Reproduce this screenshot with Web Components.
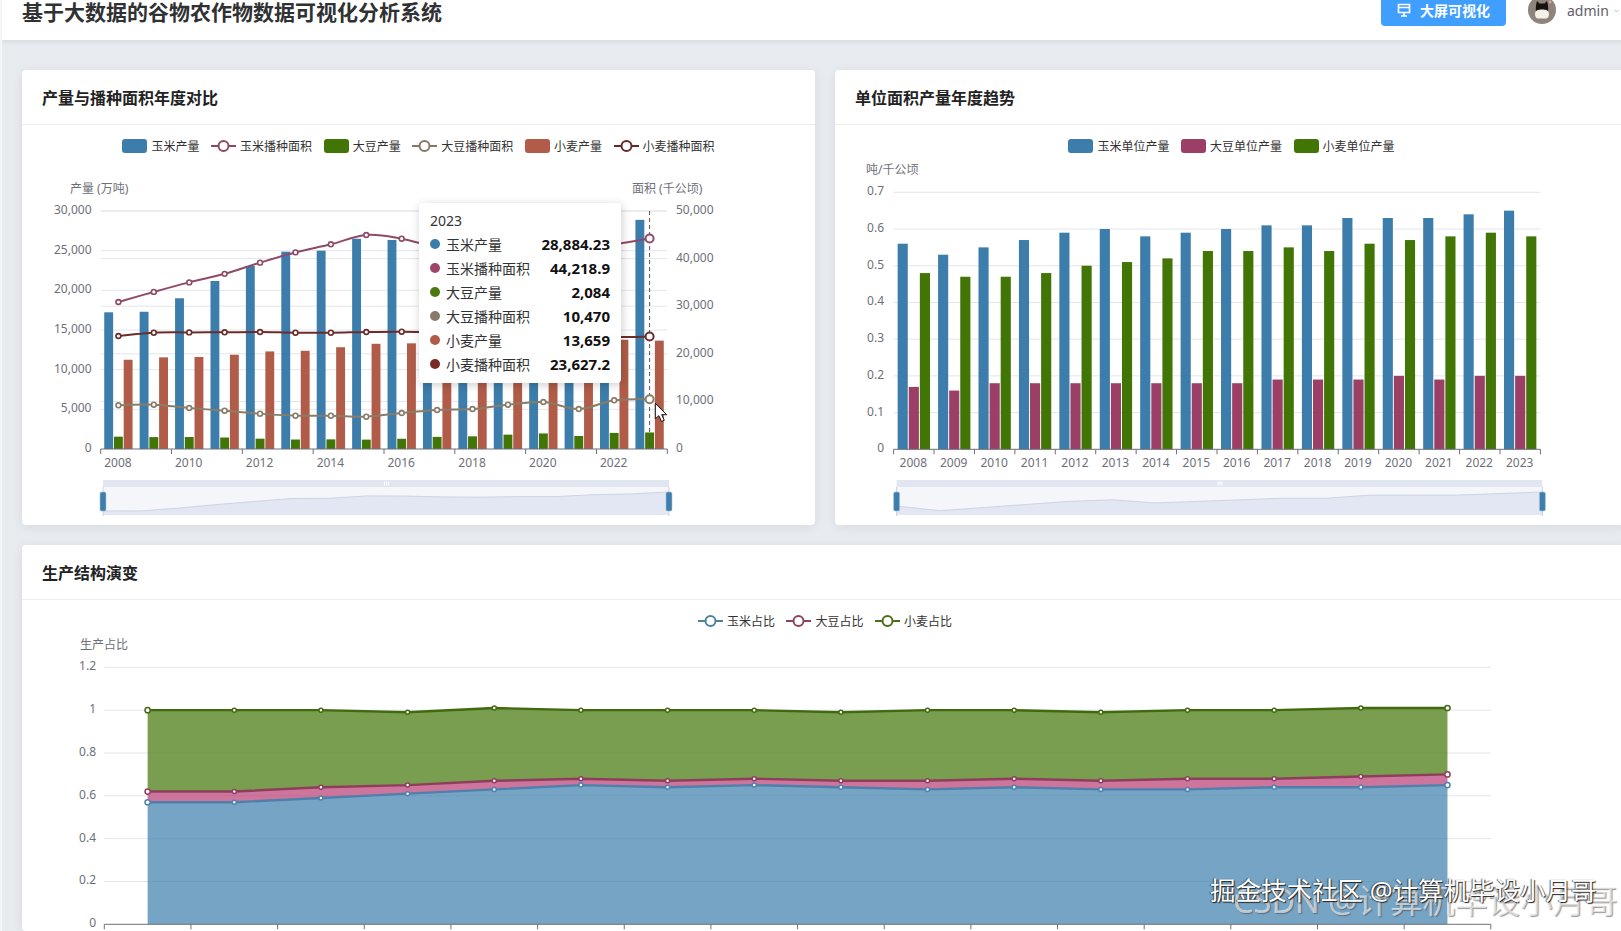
<!DOCTYPE html>
<html lang="zh">
<head>
<meta charset="utf-8">
<title>谷物农作物数据可视化分析系统</title>
<style>
  html, body { margin: 0; height: 931px; overflow: hidden; background: #f3f5f7; }
  body { font-family: "Noto Sans", "Noto Sans CJK SC", sans-serif; }
</style>
</head>
<body>
<dash-page>
  <top-bar slot="top" heading="基于大数据的谷物农作物数据可视化分析系统"></top-bar>
  <chart-card heading="产量与播种面积年度对比">
    <chart-legend>
      <legend-item kind="bar" color="#3c7dab">玉米产量</legend-item>
      <legend-item kind="line" color="#8c4a62">玉米播种面积</legend-item>
      <legend-item kind="bar" color="#417505">大豆产量</legend-item>
      <legend-item kind="line" color="#857868">大豆播种面积</legend-item>
      <legend-item kind="bar" color="#b05c48">小麦产量</legend-item>
      <legend-item kind="line" color="#642a28">小麦播种面积</legend-item>
    </chart-legend>
    <combo-chart></combo-chart>
    <chart-tooltip title="2023">
      <tip-row color="#3c7dab" value="28,884.23">玉米产量</tip-row>
      <tip-row color="#a0436a" value="44,218.9">玉米播种面积</tip-row>
      <tip-row color="#4c7a12" value="2,084">大豆产量</tip-row>
      <tip-row color="#887a6a" value="10,470">大豆播种面积</tip-row>
      <tip-row color="#b05c48" value="13,659">小麦产量</tip-row>
      <tip-row color="#7a2a26" value="23,627.2">小麦播种面积</tip-row>
    </chart-tooltip>
  </chart-card>
  <chart-card heading="单位面积产量年度趋势">
    <chart-legend>
      <legend-item kind="bar" color="#3c7dab">玉米单位产量</legend-item>
      <legend-item kind="bar" color="#9c3f66">大豆单位产量</legend-item>
      <legend-item kind="bar" color="#417505">小麦单位产量</legend-item>
    </chart-legend>
    <yield-chart></yield-chart>
  </chart-card>
  <chart-card heading="生产结构演变" wide>
    <chart-legend>
      <legend-item kind="line" color="#4f8199">玉米占比</legend-item>
      <legend-item kind="line" color="#8a4459">大豆占比</legend-item>
      <legend-item kind="line" color="#4a6e1a">小麦占比</legend-item>
    </chart-legend>
    <stack-chart></stack-chart>
  </chart-card>
  <video-marks slot="marks"></video-marks>
</dash-page>

<script>
const YEARS = Array.from({ length: 16 }, (_, i) => 2008 + i);
const AXIS_TEXT = '#6e7079';
const GRID = '#e4e6ec';
const AXIS = '#6e7079';

// px helpers, charts are drawn in page coordinates through the svg viewBox
function smoothPath(pts) {
  let d = `M${pts[0][0]} ${pts[0][1]}`;
  for (let i = 0; i < pts.length - 1; i++) {
    const p0 = pts[i - 1] || pts[i];
    const p1 = pts[i];
    const p2 = pts[i + 1];
    const p3 = pts[i + 2] || p2;
    const k = 0.18;
    d += `C${p1[0] + (p2[0] - p0[0]) * k} ${p1[1] + (p2[1] - p0[1]) * k} ${p2[0] - (p3[0] - p1[0]) * k} ${p2[1] - (p3[1] - p1[1]) * k} ${p2[0]} ${p2[1]}`;
  }
  return d;
}

function hGrid(x0, x1, ys) {
  return ys.map(y => `<line x1="${x0}" x2="${x1}" y1="${y}" y2="${y}" stroke="${GRID}"/>`).join('');
}

function yLabels(x, items, anchor = 'end') {
  return items.map(([y, t]) => `<text x="${x}" y="${y - 1.5}" text-anchor="${anchor}" dominant-baseline="central">${t}</text>`).join('');
}

function xAxis(x0, x1, y, bands, every) {
  const band = (x1 - x0) / bands;
  let s = `<line x1="${x0}" x2="${x1}" y1="${y}" y2="${y}" stroke="${AXIS}"/>`;
  for (let i = 0; i <= bands; i += every) {
    const x = x0 + i * band;
    s += `<line x1="${x}" x2="${x}" y1="${y}" y2="${y + 5}" stroke="${AXIS}"/>`;
  }
  return s;
}

function barGroup(x0, band, base, groups) {
  const avail = band * 0.8;
  const gap = avail * 0.03;
  const bw = (avail - gap * (groups.length - 1)) / groups.length;
  let s = '';
  groups.forEach((g, gi) => {
    g.heights.forEach((h, i) => {
      const x = x0 + i * band + band * 0.1 + gi * (bw + gap);
      s += `<rect x="${x.toFixed(2)}" y="${(base - h).toFixed(2)}" width="${bw.toFixed(2)}" height="${h.toFixed(2)}" fill="${g.color}"/>`;
    });
  });
  return s;
}

function sliderBox(x0, x1, tops) {
  const n = tops.length;
  const pts = tops.map((y, i) => `${(x0 + (x1 - x0) * i / (n - 1)).toFixed(1)},${y.toFixed(1)}`);
  const mid = (x0 + x1) / 2;
  return `
    <rect x="${x0}" y="480" width="${x1 - x0}" height="7" fill="#e2e6f0"/>
    <rect x="${x0}" y="487" width="${x1 - x0}" height="28" fill="#f5f6f9"/>
    <polygon points="${x0},515 ${pts.join(' ')} ${x1},515" fill="#e3e7f3"/>
    <polyline points="${pts.join(' ')}" fill="none" stroke="#cdd4e4"/>
    <line x1="${x0}" x2="${x0}" y1="487" y2="516" stroke="#c9d2e2"/>
    <line x1="${x1}" x2="${x1}" y1="487" y2="516" stroke="#c9d2e2"/>
    <rect x="${mid - 2}" y="481.5" width="1" height="4" fill="#fff"/><rect x="${mid}" y="481.5" width="1" height="4" fill="#fff"/><rect x="${mid + 2}" y="481.5" width="1" height="4" fill="#fff"/>
    <rect x="${x0 - 3}" y="492" width="6" height="19" rx="1.5" fill="#3d7eab" stroke="#a9c4d8" stroke-width=".6"/>
    <rect x="${x1 - 3}" y="492" width="6" height="19" rx="1.5" fill="#3d7eab" stroke="#a9c4d8" stroke-width=".6"/>`;
}

class SvgChart extends HTMLElement {
  constructor() {
    super();
    this.attachShadow({ mode: 'open' });
  }

  connectedCallback() {
    const [x, y, w, h] = this.box();
    this.shadowRoot.innerHTML = `
      <style>
        :host { display: block; height: ${h}px; }
        svg { display: block; width: ${w}px; height: ${h}px; overflow: hidden; }
        text { font: 12px "Noto Sans", "Noto Sans CJK SC", sans-serif; fill: ${AXIS_TEXT}; }
      </style>
      <svg viewBox="${x} ${y} ${w} ${h}">${this.draw()}</svg>`;
  }
}

class ComboChart extends SvgChart {
  box() { return [22, 153, 793, 372]; }

  draw() {
    const x0 = 100.7, x1 = 667.3, top = 211, base = 449;
    const band = (x1 - x0) / 16;
    const corn = [17230, 17300, 19000, 21176, 23067, 24870, 25000, 26500, 26350, 25900, 25700, 26080, 26070, 27250, 27720, 28884];
    const soy = [1554, 1500, 1510, 1450, 1300, 1195, 1215, 1180, 1290, 1528, 1597, 1810, 1960, 1640, 2028, 2084];
    const wheat = [11250, 11550, 11600, 11880, 12300, 12380, 12830, 13260, 13320, 13330, 13140, 13360, 13420, 13690, 13770, 13659];
    const cornArea = [30880, 33000, 35000, 36800, 39150, 41300, 43000, 44960, 44180, 42400, 42100, 41300, 41260, 43300, 43070, 44219];
    const soyArea = [9180, 9306, 8613, 8046, 7416, 6996, 6996, 6786, 7563, 8193, 8403, 9306, 9874, 8403, 10231, 10470];
    const wheatArea = [23740, 24430, 24500, 24520, 24580, 24430, 24430, 24580, 24640, 24500, 24400, 24300, 24200, 24000, 23530, 23627];
    const left = v => v / 30000 * (base - top);
    const right = v => v / 50000 * (base - top);

    const leftYs = [0, 1, 2, 3, 4, 5, 6].map(i => base - i * (base - top) / 6);
    const rightYs = [0, 1, 2, 3, 4, 5].map(i => base - i * (base - top) / 5);

    let s = hGrid(x0, x1, leftYs.slice(1)) + hGrid(x0, x1, rightYs.slice(1));
    s += `<text x="70" y="188" dominant-baseline="central">产量 (万吨)</text>`;
    s += `<text x="632" y="188" dominant-baseline="central">面积 (千公顷)</text>`;
    s += yLabels(91.5, leftYs.map((y, i) => [y, (i * 5000).toLocaleString('en-US')]));
    s += yLabels(676, rightYs.map((y, i) => [y, (i * 10000).toLocaleString('en-US')]), 'start');
    s += barGroup(x0, band, base, [
      { color: '#3c7dab', heights: corn.map(left) },
      { color: '#417505', heights: soy.map(left) },
      { color: '#b05c48', heights: wheat.map(left) },
    ]);
    s += xAxis(x0, x1, base, 16, 2);
    YEARS.forEach((yr, i) => {
      if (i % 2 === 0) s += `<text x="${x0 + band * (i + .5) - .5}" y="462" text-anchor="middle" dominant-baseline="central">${yr}</text>`;
    });

    const lastX = x0 + band * 15.5;
    s += `<line x1="${lastX}" x2="${lastX}" y1="${top}" y2="${base}" stroke="#555" stroke-dasharray="4 3"/>`;
    [[cornArea, '#8e4a66'], [soyArea, '#8a7d68'], [wheatArea, '#6b2c2a']].forEach(([vals, color]) => {
      const pts = vals.map((v, i) => [x0 + band * (i + .5), base - right(v)]);
      s += `<path d="${smoothPath(pts)}" fill="none" stroke="${color}" stroke-width="2"/>`;
      pts.forEach((p, i) => {
        const r = i === 15 ? 4 : 2.4;
        s += `<circle cx="${p[0]}" cy="${p[1]}" r="${r}" fill="#fff" stroke="${color}" stroke-width="${i === 15 ? 2 : 1.6}"/>`;
      });
    });
    s += sliderBox(103, 669, corn.map(v => 511 - (v - 17230) / (28884 - 17230) * 19));
    s += `<path transform="translate(655.3 403.3)" d="M0 0V15.5L3.6 12.4 6.2 18.2 9 17 6.4 11.4H11.4Z" fill="#fff" stroke="#111" stroke-width="1"/>`;
    return s;
  }
}

class YieldChart extends SvgChart {
  box() { return [835, 153, 793, 372]; }

  draw() {
    const x0 = 893.6, x1 = 1540.4, top = 192.3, base = 449.3;
    const band = (x1 - x0) / 16;
    const step = (base - top) / 7;
    const px = v => v / 0.1 * step;
    const corn = [.56, .53, .55, .57, .59, .60, .58, .59, .60, .61, .61, .63, .63, .63, .64, .65];
    const soy = [.17, .16, .18, .18, .18, .18, .18, .18, .18, .19, .19, .19, .20, .19, .20, .20];
    const wheat = [.48, .47, .47, .48, .50, .51, .52, .54, .54, .55, .54, .56, .57, .58, .59, .58];
    const ys = [0, 1, 2, 3, 4, 5, 6, 7].map(i => base - i * step);

    let s = hGrid(x0, x1, ys.slice(1));
    s += `<text x="866" y="169.7" dominant-baseline="central">吨/千公顷</text>`;
    s += yLabels(884, ys.map((y, i) => [y, i === 0 ? '0' : (i / 10).toFixed(1)]));
    s += barGroup(x0, band, base, [
      { color: '#3c7dab', heights: corn.map(px) },
      { color: '#9c3f66', heights: soy.map(px) },
      { color: '#417505', heights: wheat.map(px) },
    ]);
    s += xAxis(x0, x1, base, 16, 1);
    YEARS.forEach((yr, i) => {
      s += `<text x="${x0 + band * (i + .5) - .5}" y="462" text-anchor="middle" dominant-baseline="central">${yr}</text>`;
    });
    s += sliderBox(896.6, 1542.4, corn.map(v => 510.7 - (v - .53) / .12 * 18.7));
    return s;
  }
}

class StackChart extends SvgChart {
  box() { return [22, 628, 1606, 303]; }

  draw() {
    const x0 = 104.3, x1 = 1490.8, base = 924.3;
    const band = (x1 - x0) / 16;
    const step = 42.83;
    const corn = [.57, .57, .59, .61, .63, .65, .64, .65, .64, .63, .64, .63, .63, .64, .64, .65];
    const soy = [.62, .62, .64, .65, .67, .68, .67, .68, .67, .67, .68, .67, .68, .68, .69, .70];
    const wheat = [1, 1, 1, .99, 1.01, 1, 1, 1, .99, 1, 1, .99, 1, 1, 1.01, 1.01];
    const toPts = vals => vals.map((v, i) => [x0 + band * (i + .5), base - v / .2 * step]);
    const ys = [0, 1, 2, 3, 4, 5, 6].map(i => base - i * step);
    const labels = ['0', '0.2', '0.4', '0.6', '0.8', '1', '1.2'];

    const flat = pts => pts.map(p => p.join(',')).join(' ');
    const bands = (lower, upper, color) => `<polygon points="${flat(upper)} ${flat([...lower].reverse())}" fill="${color}" fill-opacity=".7"/>`;
    const pCorn = toPts(corn), pSoy = toPts(soy), pWheat = toPts(wheat);
    const floor = pCorn.map(p => [p[0], base]);

    let s = hGrid(x0, x1, ys.slice(1));
    s += `<text x="80" y="644" dominant-baseline="central">生产占比</text>`;
    s += yLabels(96, ys.map((y, i) => [y, labels[i]]));
    s += bands(floor, pCorn, '#3c7dab') + bands(pCorn, pSoy, '#b83a72') + bands(pSoy, pWheat, '#417505');
    s += xAxis(x0, x1, base, 16, 1);
    [[pCorn, '#4f80ac'], [pSoy, '#8e3e5c'], [pWheat, '#41690f']].forEach(([pts, color]) => {
      s += `<polyline points="${flat(pts)}" fill="none" stroke="${color}" stroke-width="2.4"/>`;
      pts.forEach((p, i) => {
        s += `<circle cx="${p[0]}" cy="${p[1]}" r="${i === 0 || i === 15 ? 2.6 : 2}" fill="#fff" stroke="${color}" stroke-width="1.5"/>`;
      });
    });
    return s;
  }
}

class LegendItem extends HTMLElement {
  constructor() {
    super();
    this.attachShadow({ mode: 'open' });
  }

  connectedCallback() {
    const color = this.getAttribute('color');
    const mark = this.getAttribute('kind') === 'bar'
      ? `<span class="swatch" style="background:${color}"></span>`
      : `<svg width="25" height="14" viewBox="0 0 25 14"><line x1="0" x2="25" y1="7" y2="7" stroke="${color}" stroke-width="2"/><circle cx="12.5" cy="7" r="5" fill="#fff" stroke="${color}" stroke-width="2"/></svg>`;
    this.shadowRoot.innerHTML = `
      <style>
        :host { display: flex; align-items: center; gap: 4px; font-size: 12px; line-height: 14px; color: #333; }
        .swatch { width: 25px; height: 14px; border-radius: 3px; }
        svg { display: block; }
      </style>
      ${mark}<slot></slot>`;
  }
}

class ChartLegend extends HTMLElement {
  constructor() {
    super();
    this.attachShadow({ mode: 'open' });
    this.shadowRoot.innerHTML = `
      <style>
        :host { display: flex; justify-content: center; gap: 11.6px; padding-top: 14px; height: 14px; font-family: "Noto Sans CJK SC", sans-serif; }
      </style>
      <slot></slot>`;
  }
}

class TipRow extends HTMLElement {
  constructor() {
    super();
    this.attachShadow({ mode: 'open' });
  }

  connectedCallback() {
    this.shadowRoot.innerHTML = `
      <style>
        :host { display: flex; align-items: center; height: 24px; font-size: 14px; color: #333; }
        .dot { width: 10px; height: 10px; border-radius: 50%; margin-right: 6px; background: ${this.getAttribute('color')}; }
        .name { flex: 1; font-family: "Noto Sans CJK SC", sans-serif; }
        .value { font: 700 15px "Noto Sans", sans-serif; color: #111; }
      </style>
      <span class="dot"></span><span class="name"><slot></slot></span><span class="value">${this.getAttribute('value')}</span>`;
  }
}

class ChartTooltip extends HTMLElement {
  constructor() {
    super();
    this.attachShadow({ mode: 'open' });
  }

  connectedCallback() {
    this.shadowRoot.innerHTML = `
      <style>
        :host {
          display: block; position: absolute; left: 397px; top: 78px; width: 180px; height: 160px;
          padding: 10px 11px 10px 11px; background: #fff; border-radius: 4px;
          box-shadow: 1px 2px 10px rgba(0, 0, 0, .2);
        }
        .title { height: 18px; margin: 0 0 1px; font-size: 14px; line-height: 16px; color: #333; }
      </style>
      <div class="title">${this.getAttribute('title')}</div>
      <slot></slot>`;
  }
}

class ChartCard extends HTMLElement {
  constructor() {
    super();
    this.attachShadow({ mode: 'open' });
  }

  connectedCallback() {
    this.shadowRoot.innerHTML = `
      <style>
        :host {
          display: block; background: #fff; border-radius: 4px;
          box-shadow: 0 2px 12px rgba(0, 0, 0, .08);
        }
        :host([wide]) { grid-column: 1 / 3; }
        header {
          height: 54px; padding: 0 20px; display: flex; align-items: center;
          border-bottom: 1px solid #ebeef5; font: 700 16px "Noto Sans CJK SC", sans-serif; color: #222;
        }
        .body { position: relative; }
      </style>
      <header>${this.getAttribute('heading')}</header>
      <div class="body"><slot></slot></div>`;
  }
}

class TopBar extends HTMLElement {
  constructor() {
    super();
    this.attachShadow({ mode: 'open' });
  }

  connectedCallback() {
    this.shadowRoot.innerHTML = `
      <style>
        :host {
          display: flex; align-items: center; height: 64px; margin-top: -24px; padding: 0 29px 0 20px;
          background: #fff; box-shadow: 0 1px 6px rgba(0, 21, 41, .1); position: relative;
        }
        h1 { flex: 1; margin: 5px 0 0; font: 700 21px/20px "Noto Sans CJK SC", sans-serif; color: #303133; }
        button {
          display: flex; align-items: center; gap: 9px; width: 125px; height: 36px; padding: 4px 0 0 16px;
          border: 0; border-radius: 4px; background: #409eff; color: #fff;
          font: 700 14px/16px "Noto Sans CJK SC", sans-serif;
        }
        .avatar { margin: 4px 0 0 22px; display: block; }
        .user { margin: 6px 0 0 11px; font-size: 14px; line-height: 18px; color: #606266; width: 52px; flex: none; display: flex; align-items: center; gap: 5px; }
      </style>
      <h1>${this.getAttribute('heading')}</h1>
      <button>
        <svg width="14" height="14" viewBox="0 0 14 14" fill="none" stroke="#fff" stroke-width="1.6"><path d="M1.500 1.500h11v8h-11zM1.500 4.500h11M4 13h6M7 9.500V13"/></svg>
        大屏可视化
      </button>
      <svg class="avatar" width="28" height="28" viewBox="0 0 28 28">
        <circle cx="14" cy="14" r="14" fill="#8f847c"/>
        <path d="M8 16C7.500 12 8 8 9 5l2.500 2.500h5L19 5c1 3 1.500 7 1 11z" fill="#15120f"/>
        <path d="M7 18c0-3 2-4 3-4 1-.8 7-.8 8 0 1 0 3 1 3 4s-1.500 4.500-3 4.500h-8C8.500 22.500 7 21 7 18z" fill="#f5f1e8"/>
        <circle cx="22" cy="6" r="1.400" fill="#d9a7a7"/>
      </svg>
      <span class="user">admin<svg width="8" height="6" viewBox="0 0 8 6" fill="none" stroke="#909399"><path d="M.5 1l3.500 3.500L7.500 1"/></svg></span>`;
  }
}

// overlay captions burned into the recording
class VideoMarks extends HTMLElement {
  constructor() {
    super();
    this.attachShadow({ mode: 'open' });
    this.shadowRoot.innerHTML = `
      <style>
        :host { display: block; position: absolute; inset: 0; pointer-events: none; font-family: "Noto Sans", "Noto Sans CJK SC", sans-serif; }
        span { position: absolute; white-space: nowrap; line-height: 1; }
        .csdn { left: 1231px; top: 885px; font-size: 32.5px; color: rgba(255, 255, 255, .62); text-shadow: 1px 1px 1px rgba(70, 70, 70, .55); }
        .juejin { left: 1208px; top: 878px; font-size: 25.5px; color: #fff; text-shadow: 1px 1px 1px #222, -1px 0 1px rgba(40, 40, 40, .7); }
      </style>
      <span class="csdn">CSDN @计算机毕设小月哥</span>
      <span class="juejin">掘金技术社区 @计算机毕设小月哥</span>`;
  }
}

class DashPage extends HTMLElement {
  constructor() {
    super();
    this.attachShadow({ mode: 'open' });
    this.shadowRoot.innerHTML = `
      <style>
        :host { display: block; position: relative; margin-left: 2px; width: 1646px; height: 931px; overflow: hidden; }
        main {
          display: grid; grid-template-columns: 793px 793px; gap: 20px; align-items: start; align-content: start;
          height: 931px; box-sizing: border-box; padding: 30px 20px 0; background: #e8ebf0;
        }
      </style>
      <slot name="top"></slot>
      <main><slot></slot></main>
      <slot name="marks"></slot>`;
  }
}

customElements.define('combo-chart', ComboChart);
customElements.define('yield-chart', YieldChart);
customElements.define('stack-chart', StackChart);
customElements.define('legend-item', LegendItem);
customElements.define('chart-legend', ChartLegend);
customElements.define('tip-row', TipRow);
customElements.define('chart-tooltip', ChartTooltip);
customElements.define('chart-card', ChartCard);
customElements.define('top-bar', TopBar);
customElements.define('video-marks', VideoMarks);
customElements.define('dash-page', DashPage);
</script>
</body>
</html>
